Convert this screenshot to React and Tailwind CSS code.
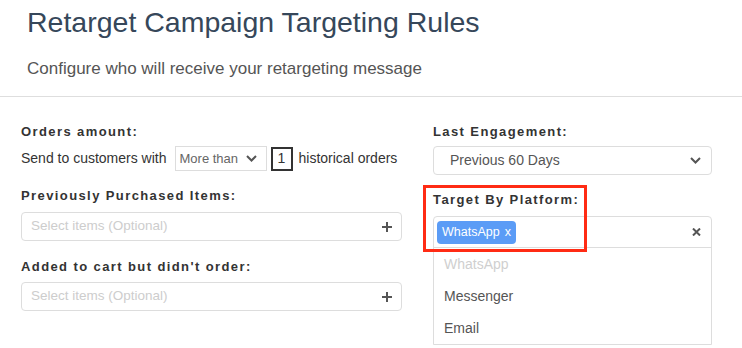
import React from "react";

const Label = ({ children }) => (
  <div className="text-[13px] leading-[16px] font-bold tracking-[1.4px] text-[#333]">{children}</div>
);

const Chevron = () => (
  <svg width="11" height="7" viewBox="0 0 11 7" fill="none">
    <path d="M1 1l4.5 4.5L10 1" stroke="#555" strokeWidth="2" />
  </svg>
);

const PlusIcon = () => (
  <svg width="10" height="10" viewBox="0 0 10 10">
    <path d="M5 0v10M0 5h10" stroke="#555" strokeWidth="2" />
  </svg>
);

const ItemPicker = () => (
  <div className="flex items-center justify-between h-[29px] border border-[#ddd] rounded-[4px] pl-[9px] pr-[9px]">
    <span className="text-[13.5px] text-[#cdcdcd]">Select items (Optional)</span>
    <PlusIcon />
  </div>
);

const App = () => {
  const platforms = [
    { name: "WhatsApp", disabled: true },
    { name: "Messenger" },
    { name: "Email" },
  ];

  return (
    <div className="w-[742px] h-[348px] overflow-hidden bg-white font-['Liberation_Sans',Arial,sans-serif]">
      {/* Header */}
      <header className="px-[27px] pt-[5px] pb-[15px] border-b border-[#dedede]">
        <h1 className="text-[28.5px] leading-[34px] text-[#36475a]">Retarget Campaign Targeting Rules</h1>
        <p className="mt-[18px] text-[17px] leading-[24px] text-[#555]">
          Configure who will receive your retargeting message
        </p>
      </header>

      <div className="flex gap-[31px] pl-[21px] pt-[27px]">
        {/* Left column */}
        <div className="w-[381px]">
          <Label>Orders amount:</Label>
          <div className="mt-[6px] h-[25px] flex items-center text-[14px] text-[#333]">
            <span>Send to customers with</span>
            <div className="ml-[8px] w-[92px] h-[25px] flex items-center justify-between border border-[#ddd] pl-[4px] pr-[9px]">
              <span className="text-[13px] text-[#666]">More than</span>
              <Chevron />
            </div>
            <div className="ml-[4px] w-[22px] h-[24px] flex items-center justify-center border-2 border-[#333] text-[14px]">
              1
            </div>
            <span className="ml-[6px]">historical orders</span>
          </div>

          <div className="mt-[17px]">
            <Label>Previously Purchased Items:</Label>
          </div>
          <div className="mt-[8px]">
            <ItemPicker />
          </div>

          <div className="mt-[18px]">
            <Label>Added to cart but didn't order:</Label>
          </div>
          <div className="mt-[7px]">
            <ItemPicker />
          </div>
        </div>

        {/* Right column */}
        <div className="w-[279px] relative">
          <Label>Last Engagement:</Label>
          <div className="mt-[6px] h-[29px] flex items-center justify-between border border-[#ddd] rounded-[4px] pl-[16px] pr-[10px]">
            <span className="text-[14px] text-[#555]">Previous 60 Days</span>
            <Chevron />
          </div>

          <div className="mt-[17px]">
            <Label>Target By Platform:</Label>
          </div>
          <div className="mt-[8px] border border-[#ddd] rounded-t-[4px]">
            <div className="h-[30px] flex items-center justify-between pl-[3px] pr-[10px]">
              <span className="h-[23px] flex items-center rounded-[4px] bg-[#5b9cf6] px-[5px] text-[12.5px] text-white">
                WhatsApp<span className="ml-[5px]">x</span>
              </span>
              <svg width="9" height="8" viewBox="0 0 9 8">
                <path d="M1 0.5l7 7M8 0.5l-7 7" stroke="#555" strokeWidth="2" />
              </svg>
            </div>
            <ul className="border-t border-[#ddd]">
              {platforms.map((p) => (
                <li
                  key={p.name}
                  className={`h-[32px] flex items-center pl-[10px] text-[14px] ${p.disabled ? "text-[#cfcfcf]" : "text-[#555]"}`}
                >
                  {p.name}
                </li>
              ))}
            </ul>
          </div>

          {/* highlight annotation */}
          <div className="absolute top-[61px] left-[-10px] w-[164px] h-[67px] border-[3px] border-[#ff2b14]" />
        </div>
      </div>
    </div>
  );
};

export default App;
